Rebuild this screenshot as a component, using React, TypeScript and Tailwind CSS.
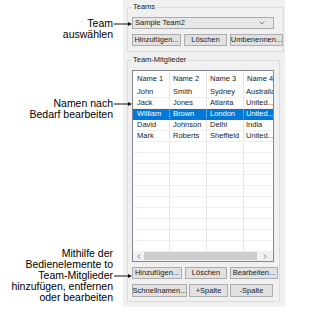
import React from 'react';

const rows = [
  ['John', 'Smith', 'Sydney', 'Australia'],
  ['Jack', 'Jones', 'Atlanta', 'United...'],
  ['William', 'Brown', 'London', 'United...'],
  ['David', 'Johnson', 'Delhi', 'India'],
  ['Mark', 'Roberts', 'Sheffield', 'United...'],
];

function Arrow({ w = 18 }: { w?: number }) {
  return (
    <svg width={w} height="5" viewBox={`0 0 ${w} 5`} className="absolute left-full top-1/2 -translate-y-1/2 ml-[1px]">
      <line x1="0" y1="2.5" x2={w - 3} y2="2.5" stroke="#111" strokeWidth="1" />
      <polygon points={`${w - 4},0.5 ${w},2.5 ${w - 4},4.5`} fill="#111" />
    </svg>
  );
}

function Note({ lines, arrowAt, className }: { lines: string[]; arrowAt: number; className?: string }) {
  return (
    <div className={`flex flex-col items-end text-[10.5px] leading-[11px] text-black ${className ?? ''}`}>
      {lines.map((l, i) => (
        <span key={i} className="relative whitespace-nowrap">
          {l}
          {i === arrowAt && <Arrow />}
        </span>
      ))}
    </div>
  );
}

function Btn({ children, w }: { children: React.ReactNode; w: string }) {
  return (
    <div className={`${w} h-[12px] flex items-center justify-center bg-[#e1e1e1] border border-[#adadad] text-[7.5px] leading-none text-[#222] whitespace-nowrap`}>
      {children}
    </div>
  );
}

export default function App() {
  return (
    <div className="w-[321px] h-[326px] bg-white flex" style={{ fontFamily: '"Liberation Sans", Arial, sans-serif' }}>
      {/* Left annotations */}
      <div className="w-[123px] flex flex-col pr-[10px] pt-[18px]">
        <Note lines={['Team', 'auswählen']} arrowAt={0} />
        <Note lines={['Namen nach', 'Bedarf bearbeiten']} arrowAt={0} className="mt-[58px]" />
        <Note
          lines={['Mithilfe der', 'Bedienelemente to', 'Team-Mitglieder', 'hinzufügen, entfernen', 'oder bearbeiten']}
          arrowAt={2}
          className="mt-[128px]"
        />
      </div>

      {/* Panel */}
      <div className="w-[162px] h-[307px] bg-[#f0f0f0] pl-[4px] pr-[5px] pt-[2px] text-[7.5px] text-[#222]">
        <fieldset className="border border-[#dcdcdc] pl-[4px] pr-0 pb-[5px]">
          <legend className="px-[1px] leading-[10px]">Teams</legend>
          <div className="mt-[5px] w-[142px] h-[12px] bg-[#e7e7e7] border border-[#acacac] flex items-center justify-between px-[2px]">
            <span className="leading-none">Sample Team2</span>
            <svg width="6" height="4" viewBox="0 0 6 4" className="mr-[6px]">
              <polyline points="0.5,0.5 3,3 5.5,0.5" fill="none" stroke="#666" strokeWidth="0.8" />
            </svg>
          </div>
          <div className="mt-[5px] flex gap-[3px]">
            <Btn w="w-[49px]">Hinzufügen...</Btn>
            <Btn w="w-[43px]">Löschen</Btn>
            <Btn w="w-[53px]">Umbenennen...</Btn>
          </div>
        </fieldset>

        <fieldset className="mt-[3px] border border-[#dcdcdc] pl-[4px] pr-0 pb-[4px]">
          <legend className="px-[1px] leading-[10px]">Team-Mitglieder</legend>
          <div className="mt-[5px] w-[142px] border border-[#828790] bg-white">
            <div className="h-[180px] overflow-hidden">
              <div className="flex h-[16px] items-center">
                {['Name 1', 'Name 2', 'Name 3', 'Name 4'].map((h, i) => (
                  <div
                    key={h}
                    className={`h-full flex items-center whitespace-nowrap overflow-hidden ${i === 0 ? 'pl-[4px]' : 'pl-[3px]'} ${i < 3 ? 'w-[37px] shrink-0 border-r border-[#e5e5e5]' : 'flex-1 min-w-0'}`}
                  >
                    {h}
                  </div>
                ))}
              </div>
              {Array.from({ length: 15 }).map((_, r) => {
                const row = rows[r];
                const sel = r === 2;
                return (
                  <div
                    key={r}
                    className={`flex h-[11px] border-b ${sel ? 'bg-[#0078d7] text-white border-[#0078d7]' : 'border-[#efefef]'}`}
                  >
                    {[0, 1, 2, 3].map((c) => (
                      <div
                        key={c}
                        className={`h-full flex items-center overflow-hidden whitespace-nowrap ${c === 0 ? 'pl-[4px]' : c === 3 ? 'pl-[2px]' : 'pl-[3px]'} ${c < 3 ? `w-[37px] shrink-0 border-r ${sel ? 'border-[#5aa5e6]' : 'border-[#e5e5e5]'}` : 'flex-1 min-w-0'}`}
                      >
                        {row ? row[c] : ''}
                      </div>
                    ))}
                  </div>
                );
              })}
            </div>
            <div className="h-[10px] flex items-center bg-[#f0f0f0]">
              <div className="w-[11px] flex justify-center">
                <svg width="4" height="5" viewBox="0 0 4 5">
                  <polyline points="3,0.5 1,2.5 3,4.5" fill="none" stroke="#606060" strokeWidth="0.8" />
                </svg>
              </div>
              <div className="w-[113px] h-[8px] bg-[#cdcdcd]" />
              <div className="flex-1 flex justify-center">
                <svg width="4" height="5" viewBox="0 0 4 5">
                  <polyline points="1,0.5 3,2.5 1,4.5" fill="none" stroke="#606060" strokeWidth="0.8" />
                </svg>
              </div>
            </div>
          </div>
          <div className="mt-[5px] flex gap-[3px]">
            <Btn w="w-[50px]">Hinzufügen...</Btn>
            <Btn w="w-[42px]">Löschen</Btn>
            <Btn w="w-[48px]">Bearbeiten...</Btn>
          </div>
          <div className="mt-[5px] flex gap-[2px]">
            <Btn w="w-[55px] h-[13px]">Schnellnamen...</Btn>
            <Btn w="w-[39px] h-[13px]">+Spalte</Btn>
            <Btn w="w-[43px] h-[13px]">-Spalte</Btn>
          </div>
        </fieldset>
      </div>
    </div>
  );
}
